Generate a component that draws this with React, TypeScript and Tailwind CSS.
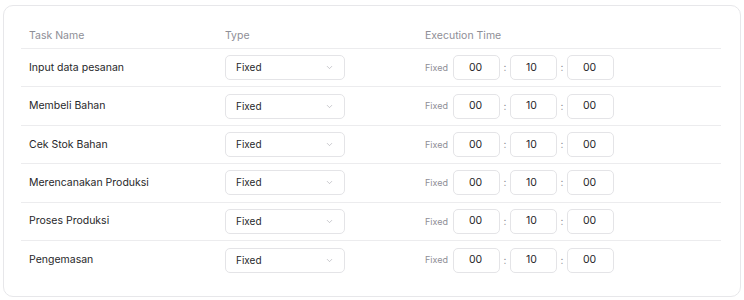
import { ChevronDown } from 'lucide-react';

const tasks = [
  'Input data pesanan',
  'Membeli Bahan',
  'Cek Stok Bahan',
  'Merencanakan Produksi',
  'Proses Produksi',
  'Pengemasan',
];

function TimeBox({ value }: { value: string }) {
  return (
    <div className="w-[47px] h-[25px] border border-[#e4e4e7] rounded-[5px] flex items-center pl-[15px] text-[10.5px] text-[#27272a] bg-white">
      {value}
    </div>
  );
}

export default function App() {
  return (
    <div className="w-[744px] h-[300px] bg-white pt-[5px] pl-[3px]" style={{ fontFamily: 'Inter, "Liberation Sans", sans-serif' }}>
      <div className="w-[738px] h-[292px] border border-[#e7e7ea] rounded-[10px] pt-[17px] pl-[17px]">
        <div className="w-[700px]">
          <div className="grid grid-cols-[204px_200px_1fr] h-[26px] items-center border-b border-[#ececee] text-[10.5px] text-[#8e8e96]">
            <div className="pl-2">Task Name</div>
            <div>Type</div>
            <div>Execution Time</div>
          </div>
          {tasks.map((name, i) => (
            <div
              key={name}
              className={`grid grid-cols-[204px_200px_1fr] h-[38.4px] items-center ${i < tasks.length - 1 ? 'border-b border-[#ececee]' : ''}`}
            >
              <div className="pl-2 text-[10.5px] text-[#27272a]">{name}</div>
              <div>
                <div className="w-[120px] h-[25px] border border-[#e4e4e7] rounded-[5px] flex items-center justify-between pl-[10px] pr-[10px] text-[10px] text-[#27272a]">
                  <span>Fixed</span>
                  <ChevronDown className="w-[9px] h-[9px] text-[#a1a1aa]" strokeWidth={1.5} />
                </div>
              </div>
              <div className="flex items-center">
                <span className="text-[9px] text-[#8e8e96] w-[28px]">Fixed</span>
                <TimeBox value="00" />
                <span className="w-[10px] text-center text-[10px] text-[#8e8e96]">:</span>
                <TimeBox value="10" />
                <span className="w-[10px] text-center text-[10px] text-[#8e8e96]">:</span>
                <TimeBox value="00" />
              </div>
            </div>
          ))}
        </div>
      </div>
    </div>
  );
}
